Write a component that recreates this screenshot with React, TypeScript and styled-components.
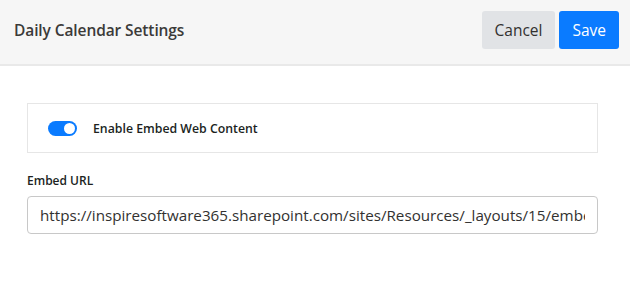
import React from "react";
import styled, { createGlobalStyle } from "styled-components";

const Global = createGlobalStyle`
  html, body { margin: 0; padding: 0; background: #ffffff; }
  body { font-family: "Open Sans", "Noto Sans", sans-serif; color: #323130; }
  * { box-sizing: border-box; }
`;

const Page = styled.div`
  width: 630px;
  height: 295px;
  display: flex;
  flex-direction: column;
  background: #ffffff;
`;

const Header = styled.header`
  height: 66px;
  background: #f6f6f6;
  border-bottom: 2px solid #e9e9e9;
  display: flex;
  align-items: center;
  justify-content: space-between;
  padding: 0 11px 4px 14px;
`;

const Title = styled.h1`
  margin: 0;
  font-size: 15.5px;
  font-weight: 600;
  color: #3b3a39;
  letter-spacing: -0.1px;
`;

const Actions = styled.div`
  display: flex;
  gap: 4px;
`;

const Button = styled.button<{ $primary?: boolean }>`
  height: 38px;
  padding: 0 13px;
  border: none;
  border-radius: 3px;
  font-family: inherit;
  font-size: 15.5px;
  background: ${(p) => (p.$primary ? "#0a7bff" : "#e1e3e6")};
  color: ${(p) => (p.$primary ? "#ffffff" : "#323130")};
`;

const Body = styled.main`
  padding: 37px 32px 0 27px;
  display: flex;
  flex-direction: column;
`;

const Card = styled.div`
  height: 50px;
  border: 1px solid #e6e6e6;
  display: flex;
  align-items: center;
  gap: 16px;
  padding: 0 20px;
`;

const Toggle = styled.span`
  width: 29px;
  height: 15px;
  border-radius: 8px;
  background: #0a7bff;
  position: relative;
  &::after {
    content: "";
    position: absolute;
    right: 2px;
    top: 2px;
    width: 11px;
    height: 11px;
    border-radius: 50%;
    background: #ffffff;
  }
`;

const ToggleLabel = styled.span`
  font-size: 12.3px;
  font-weight: 600;
  color: #201f1e;
`;

const FieldLabel = styled.label`
  margin-top: 19px;
  font-size: 12px;
  font-weight: 600;
  color: #201f1e;
`;

const Input = styled.input`
  margin-top: 7px;
  height: 38px;
  width: 100%;
  border: 1px solid #c8c8c8;
  border-radius: 4px;
  padding: 0 12px;
  font-family: inherit;
  font-size: 15.2px;
  color: #323130;
  outline: none;
`;

export default function App() {
  return (
    <Page>
      <Global />
      <Header>
        <Title>Daily Calendar Settings</Title>
        <Actions>
          <Button>Cancel</Button>
          <Button $primary>Save</Button>
        </Actions>
      </Header>
      <Body>
        <Card>
          <Toggle />
          <ToggleLabel>Enable Embed Web Content</ToggleLabel>
        </Card>
        <FieldLabel>Embed URL</FieldLabel>
        <Input
          readOnly
          value="https://inspiresoftware365.sharepoint.com/sites/Resources/_layouts/15/embed.aspx"
        />
      </Body>
    </Page>
  );
}
